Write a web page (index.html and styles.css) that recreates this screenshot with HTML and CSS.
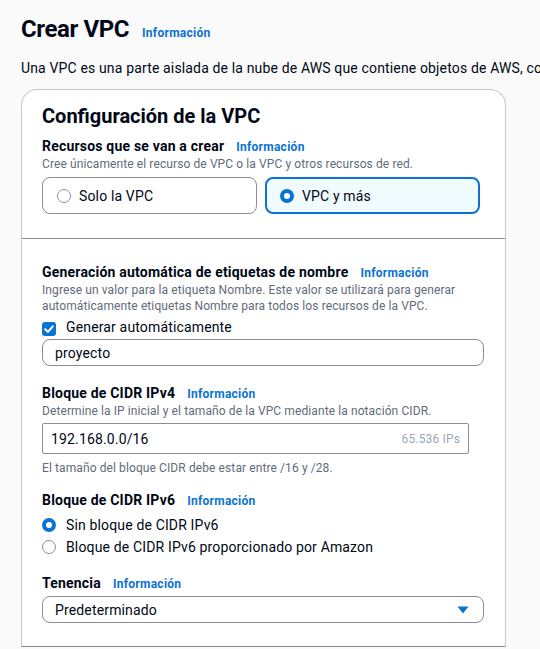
FILE: index.html
```html
<!DOCTYPE html>
<html lang="es">
<head>
<meta charset="utf-8">
<title>Crear VPC</title>
<link rel="stylesheet" href="styles.css">
</head>
<body>
<main class="page">
  <header class="page-head">
    <h1 class="page-title">Crear VPC</h1>
    <a class="info info-lg" href="#">Información</a>
  </header>
  <p class="lead">Una VPC es una parte aislada de la nube de AWS que contiene objetos de AWS, como instancias de Amazon EC2.</p>

  <section class="card">
    <div class="card-top">
      <h2 class="card-title">Configuración de la VPC</h2>
      <div class="field">
        <div class="label-row"><span class="label">Recursos que se van a crear</span><a class="info" href="#">Información</a></div>
        <p class="desc">Cree únicamente el recurso de VPC o la VPC y otros recursos de red.</p>
        <div class="tiles">
          <label class="tile"><span class="radio"></span><span>Solo la VPC</span></label>
          <label class="tile tile-on"><span class="radio radio-on"></span><span>VPC y más</span></label>
        </div>
      </div>
    </div>

    <div class="card-body">
      <div class="field">
        <div class="label-row"><span class="label">Generación automática de etiquetas de nombre</span><a class="info" href="#">Información</a></div>
        <p class="desc">Ingrese un valor para la etiqueta Nombre. Este valor se utilizará para generar automáticamente etiquetas Nombre para todos los recursos de la VPC.</p>
        <label class="check-row">
          <span class="checkbox"><svg width="14" height="14" viewBox="0 0 14 14"><path d="M3.2 7.3 L5.9 9.9 L10.8 4.3" fill="none" stroke="#fff" stroke-width="2" stroke-linecap="round" stroke-linejoin="round"/></svg></span>
          <span>Generar automáticamente</span>
        </label>
        <div class="input input-round input-name">proyecto</div>
      </div>

      <div class="field field-gap">
        <div class="label-row"><span class="label">Bloque de CIDR IPv4</span><a class="info" href="#">Información</a></div>
        <p class="desc">Determine la IP inicial y el tamaño de la VPC mediante la notación CIDR.</p>
        <div class="input input-cidr"><span>192.168.0.0/16</span><span class="hint">65.536 IPs</span></div>
        <p class="desc constraint">El tamaño del bloque CIDR debe estar entre /16 y /28.</p>
      </div>

      <div class="field field-gap2">
        <div class="label-row"><span class="label">Bloque de CIDR IPv6</span><a class="info" href="#">Información</a></div>
        <div class="radio-group">
          <label class="radio-row"><span class="radio radio-on"></span><span>Sin bloque de CIDR IPv6</span></label>
          <label class="radio-row"><span class="radio"></span><span>Bloque de CIDR IPv6 proporcionado por Amazon</span></label>
        </div>
      </div>

      <div class="field field-gap3">
        <div class="label-row"><span class="label">Tenencia</span><a class="info" href="#">Información</a></div>
        <div class="input input-round select"><span>Predeterminado</span>
          <svg class="caret" width="12" height="8" viewBox="0 0 12 8"><path d="M0.5 0.5 H11.5 L6 7.5 Z" fill="#0972d3"/></svg>
        </div>
      </div>
    </div>
  </section>
</main>
</body>
</html>
```
FILE: styles.css
```css
html, body {
  margin: 0;
  padding: 0;
  overflow: hidden;
  background: #fafafa;
}
body {
  font-family: Roboto, "Noto Sans", sans-serif;
  color: #000716;
  font-size: 14px;
  line-height: 20px;
  letter-spacing: 0.15px;
}
.page {
  padding: 14px 0 0 21px;
  width: 485px;
}
.page-head {
  display: flex;
  align-items: baseline;
  gap: 13px;
}
.page-title {
  margin: 0;
  font-size: 24px;
  line-height: 30px;
  font-weight: 700;
  letter-spacing: -0.4px;
}
.info {
  color: #0972d3;
  font-size: 12px;
  font-weight: 700;
  text-decoration: none;
  line-height: 16px;
  letter-spacing: 0.27px;
}
.lead {
  margin: 14px 0 0;
  white-space: nowrap;
  font-size: 14px;
  line-height: 20px;
}
.card {
  margin-top: 11px;
  background: #fff;
  border: 1px solid #c6c6cd;
  border-bottom: 1px solid #8c8c94;
  border-radius: 16px 16px 0 0;
}
.card-top {
  padding: 14px 20px 24px;
  border-bottom: 1px solid #8c8c94;
}
.card-title {
  margin: 0 0 8px;
  font-size: 20px;
  line-height: 24px;
  font-weight: 700;
  letter-spacing: 0;
}
.card-body {
  padding: 23px 20px 23px;
}
.label-row {
  display: flex;
  align-items: baseline;
  gap: 12px;
}
.label {
  font-weight: 700;
  font-size: 14px;
  line-height: 20px;
  letter-spacing: 0.2px;
}
.desc {
  margin: 0;
  font-size: 12px;
  line-height: 16px;
  color: #5f6b7a;
  letter-spacing: 0.1px;
}
.tiles {
  display: flex;
  gap: 8px;
  margin-top: 5px;
}
.tile {
  box-sizing: border-box;
  width: 215px;
  height: 37px;
  border: 1px solid #8c8c94;
  border-radius: 8px;
  display: flex;
  align-items: center;
  gap: 8px;
  padding-left: 14px;
}
.tile-on {
  border: 2px solid #0972d3;
  background: #f0fbff;
  padding-left: 13px;
}
.radio {
  box-sizing: border-box;
  width: 14px;
  height: 14px;
  border-radius: 50%;
  border: 1px solid #8c8c94;
  background: #fff;
  flex: none;
}
.radio-on {
  border: 4px solid #0972d3;
}
.check-row {
  display: flex;
  align-items: center;
  gap: 10px;
  margin-top: 3px;
  height: 20px;
}
.checkbox {
  box-sizing: border-box;
  width: 14px;
  height: 14px;
  border-radius: 3px;
  background: #0972d3;
  display: flex;
  flex: none;
  margin-top: 3px;
}
.input {
  box-sizing: border-box;
  border: 1px solid #8c8c94;
  display: flex;
  align-items: center;
  font-size: 14px;
}
.input-round {
  height: 27px;
  border-radius: 8px;
  padding: 0 12px;
  width: 442px;
}
.input-name {
  margin-top: 2px;
}
.input-cidr {
  margin-top: 4px;
  height: 31px;
  width: 427px;
  border-radius: 2px;
  padding: 0 8px;
  justify-content: space-between;
}
.hint {
  font-size: 12px;
  color: #9ba7b6;
}
.constraint {
  margin-top: 6px;
}
.field-gap { margin-top: 17px; }
.field-gap2 { margin-top: 14px; }
.field-gap3 { margin-top: 16px; }
.radio-group {
  display: flex;
  flex-direction: column;
  gap: 2px;
  margin-top: 5px;
}
.radio-row {
  display: flex;
  align-items: center;
  gap: 10px;
  height: 20px;
}
.select {
  margin-top: 3px;
  justify-content: space-between;
  padding-right: 14px;
}
.caret {
  display: block;
}
```
